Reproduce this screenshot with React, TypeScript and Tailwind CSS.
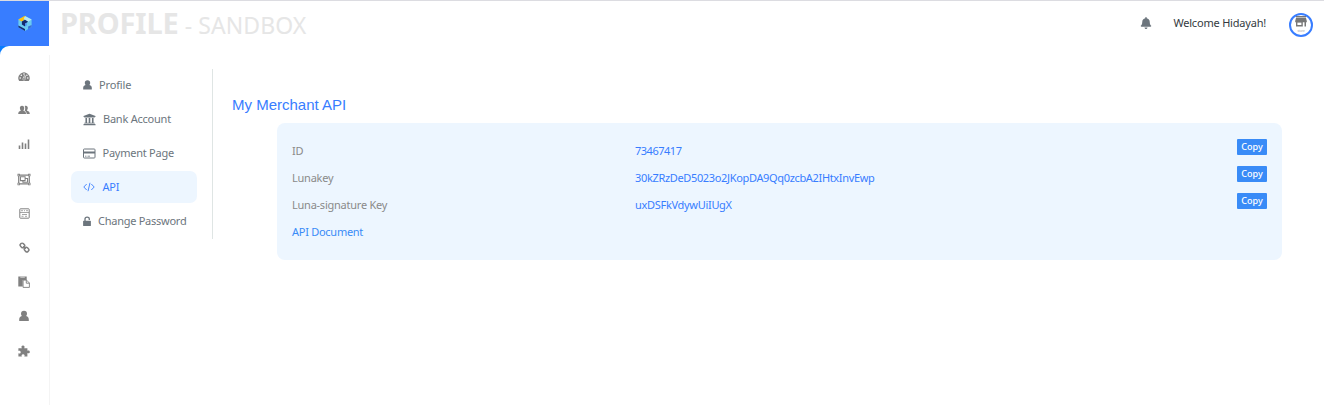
import React from 'react';
import { FaRegObjectGroup, FaUniversity, FaBell } from 'react-icons/fa';

const Person = ({ className = '' }: { className?: string }) => (
  <svg viewBox="0 0 10 12" className={className} fill="currentColor">
    <path d="M5 .8C7 .8 8 2 8 3.800c0 .9-.3 1.600-.9 2.100 1.900.4 2.700 1.500 2.700 3.500v1.700H.2V9.400c0-2 .8-3.100 2.700-3.500C2.300 5.400 2 4.700 2 3.800 2 2 3 .8 5 .8z" />
  </svg>
);

const Dial = () => (
  <svg viewBox="0 0 12 11" className="h-[11px] w-[12px]">
    <path d="M1.200 10A5.600 5.600 0 1 1 10.800 10z" fill="currentColor" />
    <g fill="#fff">
      <circle cx="6" cy="3" r=".8" />
      <circle cx="3.300" cy="4.200" r=".8" />
      <circle cx="2.200" cy="7" r=".8" />
      <circle cx="8.900" cy="4.200" r=".7" />
      <circle cx="9.800" cy="7" r=".8" />
    </g>
    <path d="M6 8L7 4.500" stroke="#fff" strokeWidth="2" />
    <path d="M6 8L7 4.500" stroke="currentColor" strokeWidth=".8" />
    <circle cx="6" cy="8" r="1.300" fill="currentColor" stroke="#fff" strokeWidth=".4" />
  </svg>
);

const People = () => (
  <svg viewBox="0 0 12 10" className="h-[10px] w-[12px]" fill="currentColor">
    <path d="M4 .8c1.600 0 2.300 1.100 2.200 2.500 0 .9-.3 1.500-.7 2v.5C7.300 6.400 8 7 8 9H.2c.1-2 .8-2.600 2.500-3.200v-.5c-.4-.5-.8-1.100-.8-2C1.800 1.900 2.500.8 4 .8z" />
    <path d="M6.700 1.100C8.400.3 10 1.200 9.800 3.200c-.1.900-.3 1.400-.7 1.900v.6c1.800.6 2.600 1.300 2.700 3.300H8.700c-.1-1.700-.7-2.700-2-3.300.5-.9.800-2.900 0-4.600z" />
  </svg>
);

const Bars = () => (
  <svg viewBox="0 0 12 11" className="h-[11px] w-[12px]" fill="none" stroke="currentColor">
    <path d="M1.500 6.500v3.500M4.500 3.500v6.500M7.500 4.500v5.500M10.500 .5v9.500" strokeWidth="1.600" />
  </svg>
);

const Board = () => (
  <svg viewBox="0 0 11 11" className="h-[11px] w-[11px]" fill="none" stroke="currentColor">
    <rect x=".8" y=".8" width="9.400" height="9.400" rx=".6" />
    <path d="M2 2.700h2M5 2.700h1M7 2.700h2M1 4.500h9M3 6.500h5M2.500 8.300h2M6 8.300h2" strokeWidth=".7" />
  </svg>
);

const Chain = () => (
  <svg viewBox="0 0 11 11" className="h-[11px] w-[11px]" fill="none" stroke="currentColor" strokeWidth="1.500">
    <rect x="1.100" y="1.500" width="4.600" height="3.800" rx="1.700" transform="rotate(45 3.400 3.400)" />
    <rect x="5.300" y="5.700" width="4.600" height="3.800" rx="1.700" transform="rotate(45 7.600 7.600)" />
    <path d="M4.200 4.200l2.600 2.600" />
  </svg>
);

const Paste = () => (
  <svg viewBox="0 0 12 12" className="size-[12px]">
    <path d="M.3 .5h8.400V4H4.700v6.500H.3z" fill="currentColor" />
    <path d="M2.300 1.200h4.500" stroke="#ddd" strokeWidth=".9" />
    <path d="M5.100 4.100h3.400l2.900 2.900v4.400H5.100zM8.300 4.100v3.100h3.100" fill="#fff" stroke="currentColor" strokeWidth=".9" />
  </svg>
);

const Puzzle = () => (
  <svg viewBox="0 0 12 12" className="size-[12px]" fill="currentColor">
    <path d="M.4 3.200h3.500C3 1.700 3.500.4 5 .4s2 1.300 1.200 2.800h3.200v2.600c1.100-.6 2.400-.3 2.400 1.100s-1.300 1.800-2.400 1.100v3.500H6.300c.7-1.300.2-2.300-1.200-2.300s-1.900 1-1.200 2.300H.4V8.300c1.400.7 2.300.2 2.300-1S1.800 5.400.4 6z" />
  </svg>
);

const Card = () => (
  <svg viewBox="0 0 13 11" className="h-[11px] w-[13px]" fill="none" stroke="currentColor">
    <rect x=".5" y="1" width="11.500" height="9" rx=".8" />
    <path d="M.5 4.500H12" strokeWidth="2" />
    <path d="M2 8.200h1.500M4.500 8.200H7" strokeWidth=".8" />
  </svg>
);

const Code = () => (
  <svg viewBox="0 0 12 10" className="h-[10px] w-[12px]" fill="none" stroke="currentColor" strokeWidth=".9">
    <path d="M3.700 2L.8 5l2.900 3M8.300 2l2.900 3-2.900 3M7 .8L5 9.200" />
  </svg>
);

const Lock = () => (
  <svg viewBox="0 0 8 11" className="h-[11px] w-[8px]">
    <path d="M2 6V3C2 .4 6.300.4 6.300 3V4" fill="none" stroke="currentColor" strokeWidth="1.300" />
    <rect x=".1" y="4.800" width="7.800" height="5.200" rx=".6" fill="currentColor" />
  </svg>
);

const Store = () => (
  <svg viewBox="0 0 12 11" className="h-[11px] w-[12px] text-[#777]" fill="currentColor">
    <path d="M1 0h10v1.500H1zM1 2h10l.8 3V6.300H.2V5z" />
    <path d="M1 6h6.800v4.500H1zM2.400 6.500v2.500h4V6.500z" fillRule="evenodd" />
    <path d="M9.500 6H11v4.500H9.500z" />
  </svg>
);

const Logo = () => (
  <svg viewBox="0 0 16 18" className="h-[17px] w-[16px]">
    <path d="M8 1l7 3.800v8L8 17l-7-4V4.800z" fill="#6bcbf0" />
    <path d="M8 .8L1 4.800l3.500 2L8 4.800l-1-1.500 2-1.800z" fill="#ffc20e" />
    <path d="M8.500 1.200L15 4.800l-3.700 2.400L7.500 5l-.8-1.800z" fill="#b5e8f5" />
    <path d="M4.700 7L8 5l3.300 2.200L8 9.200v2.900L4.700 10z" fill="#142b70" />
    <path d="M8 9.200l1.800-1v2.900L8 12.100z" fill="#4d93f5" />
    <path d="M1 11l7 3.700V17l-7-4z" fill="#152c75" />
    <path d="M11.300 12.200L15 10.500v2.300l-3.700 2.300z" fill="#3b6fd5" />
  </svg>
);

const sideIcons = [
  <Dial />,
  <People />,
  <Bars />,
  <FaRegObjectGroup className="h-[13px] w-[14px]" />,
  <Board />,
  <Chain />,
  <Paste />,
  <Person className="h-[12px] w-[10px]" />,
  <Puzzle />,
];

const menu = [
  { label: 'Profile', icon: <Person className="h-[12px] w-[9px]" />, style: 'gap-[7px] tracking-[-0.150px]' },
  { label: 'Bank Account', icon: <FaUniversity className="size-[13px]" />, style: 'gap-[7px] tracking-[-0.230px]' },
  { label: 'Payment Page', icon: <Card />, style: 'gap-[6.500px] tracking-[-0.250px]' },
  { label: 'API', icon: <Code />, style: 'gap-[7.500px] tracking-[-0.250px]' },
  { label: 'Change Password', icon: <Lock />, style: 'gap-[7px] tracking-[-0.260px]' },
];

const rows = [
  { label: 'ID', value: '73467417', style: 'tracking-[-0.480px]' },
  { label: 'Lunakey', value: '30kZRzDeD5023o2JKopDA9Qq0zcbA2IHtxInvEwp', style: 'tracking-[-0.340px]' },
  { label: 'Luna-signature Key', value: 'uxDSFkVdywUiIUgX', style: 'tracking-[-0.300px]' },
];

export default function App() {
  return (
    <div className="flex h-[405px] w-full overflow-hidden border-t border-[#dcdce1] bg-white font-['Noto_Sans',sans-serif] text-[11px]">
      <aside className="flex w-[50px] shrink-0 flex-col">
        <div className="flex h-[45px] w-[49px] items-center justify-center bg-[#387dff] pl-px"><Logo /></div>
        <div className="w-[49px] bg-[#087cff]">
          <div className="h-[9px] rounded-tl-[9px] bg-white" />
        </div>
        <nav className="flex grow flex-col items-center border-r border-[#f4f4f4] pt-[4px] pr-px text-[#808080]">
          {sideIcons.map((icon, i) => (
            <div key={i} className="flex h-[34.300px] w-full shrink-0 items-center justify-center">{icon}</div>
          ))}
        </nav>
      </aside>
      <div className="flex grow flex-col">
        <header className="flex h-[46px] shrink-0 items-center justify-between pr-[11px] pl-[10px]">
          <h1 className="text-[23px] leading-[46px] tracking-[0.080px] whitespace-pre text-[#e6e6e6]"><span className="text-[29px] font-bold tracking-[-0.140px]">PROFILE</span> - SANDBOX</h1>
          <div className="flex items-center">
            <FaBell className="mr-[21px] mb-[3px] size-[12px] text-[#6c757d]" />
            <span className="mr-[23px] mb-[2px] tracking-[-0.200px] text-[#343a40]">Welcome Hidayah!</span>
            <div className="mt-px flex size-[24px] flex-col items-center rounded-full border-2 border-[#387dff] pt-px">
              <Store />
              <span className="mt-[2px] text-[3px] leading-[4px] text-[#999]">store</span>
            </div>
          </div>
        </header>
        <main className="flex pt-[22px]">
          <nav className="flex h-[170px] w-[163px] shrink-0 flex-col gap-[2px] border-r border-[#dfe5e4] pl-[21px]">
            {menu.map((m) => (
              <a key={m.label} className={`flex h-[32px] w-[126px] items-center rounded-[7px] pl-[12px] ${m.style} ${m.label === 'API' ? 'bg-[#edf6ff] text-[#387dff]' : 'text-[#6c757d]'}`}>
                {m.icon}
                <span className="whitespace-nowrap">{m.label}</span>
              </a>
            ))}
          </nav>
          <section className="grow pr-[42px] pl-[19px]">
            <h2 className="pt-[26px] font-['Liberation_Sans',Arial,sans-serif] text-[15px] leading-[20px] text-[#387dff]">My Merchant API</h2>
            <div className="mt-[8px] ml-[45px] h-[137px] rounded-[8px] bg-[#edf6ff] px-[15px] pt-[15px]">
              {rows.map((r) => (
                <div key={r.label} className="flex h-[27px] items-center">
                  <span className="w-[343px] tracking-[-0.240px] text-[#8a8a8a]">{r.label}</span>
                  <span className={`grow text-[#387dff] ${r.style}`}>{r.value}</span>
                  <button className="mb-[9px] h-[16px] w-[30px] rounded-[1px] bg-[#398bf7] text-[9px] leading-[16px] font-medium text-white">Copy</button>
                </div>
              ))}
              <a className="flex h-[27px] items-center tracking-[-0.270px] text-[#398bf7]">API Document</a>
            </div>
          </section>
        </main>
      </div>
    </div>
  );
}
